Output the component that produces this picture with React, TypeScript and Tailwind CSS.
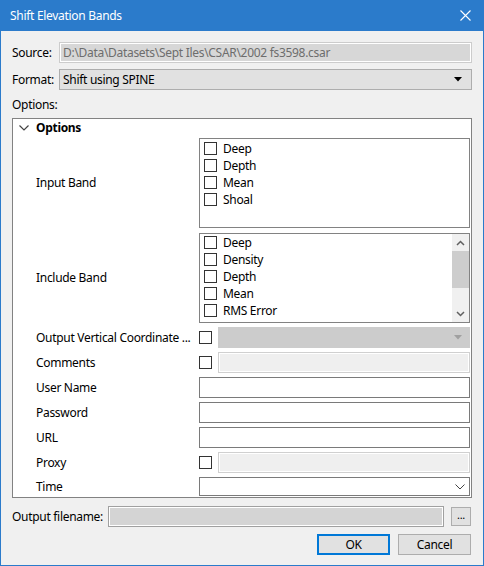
import React from "react";

const CheckBox = () => (
  <div className="w-[13px] h-[13px] border border-[#333333] bg-white shrink-0" />
);

const ListItem = ({ label }: { label: string }) => (
  <div className="flex items-center h-[17px] pl-[4px]">
    <CheckBox />
    <span className="ml-[6px] leading-none">{label}</span>
  </div>
);

const Row = ({ label, children }: { label: string; children: React.ReactNode }) => (
  <div className="flex items-center h-[21px]">
    <div className="w-[186px] shrink-0 pl-[23px] whitespace-nowrap">{label}</div>
    <div className="flex-1 flex items-center h-full">{children}</div>
  </div>
);

export default function App() {
  return (
    <div className="w-[484px] h-[566px] flex flex-col bg-[#2b7bcb] font-['Noto_Sans',sans-serif] text-[12px] tracking-[-0.3px] text-black leading-none">
      {/* Title bar */}
      <div className="h-[31px] flex items-center justify-between pl-[10px] pr-[12px] text-white shrink-0">
        <span className="text-[12px]">Shift Elevation Bands</span>
        <svg width="11" height="11" viewBox="0 0 11 11" className="mr-[1px]">
          <path d="M0.5 0.5 L10.5 10.5 M10.5 0.5 L0.5 10.5" stroke="white" strokeWidth="1.1" />
        </svg>
      </div>
      {/* Body */}
      <div className="flex-1 mx-[1px] mb-[1px] bg-[#f0f0f0] flex flex-col pl-[11px] pr-[11px] pt-[11px]">
        {/* Source */}
        <div className="flex items-center h-[21px]">
          <span className="w-[47px] shrink-0">Source:</span>
          <div className="flex-1 h-[21px] border border-[#cccccc] bg-[#d7d7d7] shadow-[inset_0_0_0_1px_#ffffff] flex items-center pl-[3px] text-[#6d6d6d]">
            D:\Data\Datasets\Sept Iles\CSAR\2002 fs3598.csar
          </div>
        </div>
        {/* Format */}
        <div className="flex items-center h-[21px] mt-[6px]">
          <span className="w-[47px] shrink-0">Format:</span>
          <div className="flex-1 h-[21px] border border-[#adadad] bg-[#e1e1e1] flex items-center justify-between pl-[3px] pr-[9px]">
            <span>Shift using SPINE</span>
            <svg width="8" height="5" viewBox="0 0 8 5">
              <path d="M0 0 H8 L4 4.5 Z" fill="#000" />
            </svg>
          </div>
        </div>
        <div className="mt-[8px] h-[14px] flex items-center">Options:</div>
        {/* Options panel */}
        <div className="mt-[6px] h-[380px] border border-[#828282] bg-white flex flex-col pr-[1px]">
          <div className="h-[19px] flex items-center pb-[1px]">
            <svg width="10" height="6" viewBox="0 0 10 6" className="ml-[6px]">
              <path d="M0.5 0.5 L5 5 L9.5 0.5" stroke="#444" strokeWidth="1.2" fill="none" />
            </svg>
            <span className="ml-[7px] font-bold">Options</span>
          </div>
          <div className="flex flex-col gap-[4px]">
            {/* Input Band */}
            <div className="flex items-center h-[90px]">
              <div className="w-[186px] shrink-0 pl-[23px]">Input Band</div>
              <div className="flex-1 h-full border border-[#828282] pt-[1px]">
                {["Deep", "Depth", "Mean", "Shoal"].map((l) => (
                  <ListItem key={l} label={l} />
                ))}
              </div>
            </div>
            {/* Include Band */}
            <div className="flex items-center h-[90px] mt-[1px]">
              <div className="w-[186px] shrink-0 pl-[23px]">Include Band</div>
              <div className="flex-1 h-full border border-[#828282] flex">
                <div className="flex-1">
                  {["Deep", "Density", "Depth", "Mean", "RMS Error"].map((l) => (
                    <ListItem key={l} label={l} />
                  ))}
                </div>
                <div className="w-[17px] bg-[#f0f0f0] flex flex-col">
                  <div className="h-[17px] flex items-center justify-center">
                    <svg width="9" height="6" viewBox="0 0 9 6">
                      <path d="M1 5 L4.5 1.5 L8 5" stroke="#606060" strokeWidth="1.5" fill="none" />
                    </svg>
                  </div>
                  <div className="h-[37px] bg-[#cdcdcd]" />
                  <div className="flex-1" />
                  <div className="h-[17px] flex items-center justify-center">
                    <svg width="9" height="6" viewBox="0 0 9 6">
                      <path d="M1 1 L4.5 4.5 L8 1" stroke="#606060" strokeWidth="1.5" fill="none" />
                    </svg>
                  </div>
                </div>
              </div>
            </div>
            <Row label="Output Vertical Coordinate ...">
              <CheckBox />
              <div className="ml-[6px] flex-1 h-full bg-[#cccccc] border border-[#cccccc] flex items-center justify-end pr-[7px]">
                <svg width="8" height="5" viewBox="0 0 8 5">
                  <path d="M0 0 H8 L4 4.5 Z" fill="#a0a0a0" />
                </svg>
              </div>
            </Row>
            <Row label="Comments">
              <CheckBox />
              <div className="ml-[6px] flex-1 h-full bg-[#efefef] border border-[#d0d0d0] shadow-[inset_0_0_0_1px_#ffffff]" />
            </Row>
            <Row label="User Name">
              <div className="flex-1 h-full bg-white border border-[#7a7a7a]" />
            </Row>
            <Row label="Password">
              <div className="flex-1 h-full bg-white border border-[#7a7a7a]" />
            </Row>
            <Row label="URL">
              <div className="flex-1 h-full bg-white border border-[#7a7a7a]" />
            </Row>
            <Row label="Proxy">
              <CheckBox />
              <div className="ml-[6px] flex-1 h-full bg-[#efefef] border border-[#d0d0d0] shadow-[inset_0_0_0_1px_#ffffff]" />
            </Row>
            <div className="flex items-center h-[19px]">
              <div className="w-[186px] shrink-0 pl-[23px]">Time</div>
              <div className="flex-1 h-full bg-white border border-[#7a7a7a] flex items-center justify-end pr-[4px]">
                <svg width="10" height="6" viewBox="0 0 10 6">
                  <path d="M0.5 0.5 L5 5 L9.5 0.5" stroke="#444" strokeWidth="1" fill="none" />
                </svg>
              </div>
            </div>
          </div>
        </div>
        {/* Output filename */}
        <div className="flex items-center h-[21px] mt-[8px]">
          <span className="w-[96px] shrink-0 whitespace-nowrap">Output filename:</span>
          <div className="w-[336px] h-[21px] border border-[#a0a0a0] bg-[#d4d4d4] shadow-[inset_0_0_0_1px_#ffffff]" />
          <div className="ml-[7px] w-[20px] h-[19px] border border-[#adadad] bg-[#e1e1e1] flex items-end justify-center pb-[5px] text-[11px]">
            ...
          </div>
        </div>
        {/* Buttons */}
        <div className="flex justify-end mt-[7px] gap-[8px] pr-[1px]">
          <div className="w-[73px] h-[21px] border-2 border-[#0078d7] bg-[#e1e1e1] flex items-center justify-center">OK</div>
          <div className="w-[73px] h-[21px] border border-[#adadad] bg-[#e1e1e1] flex items-center justify-center">Cancel</div>
        </div>
      </div>
    </div>
  );
}
